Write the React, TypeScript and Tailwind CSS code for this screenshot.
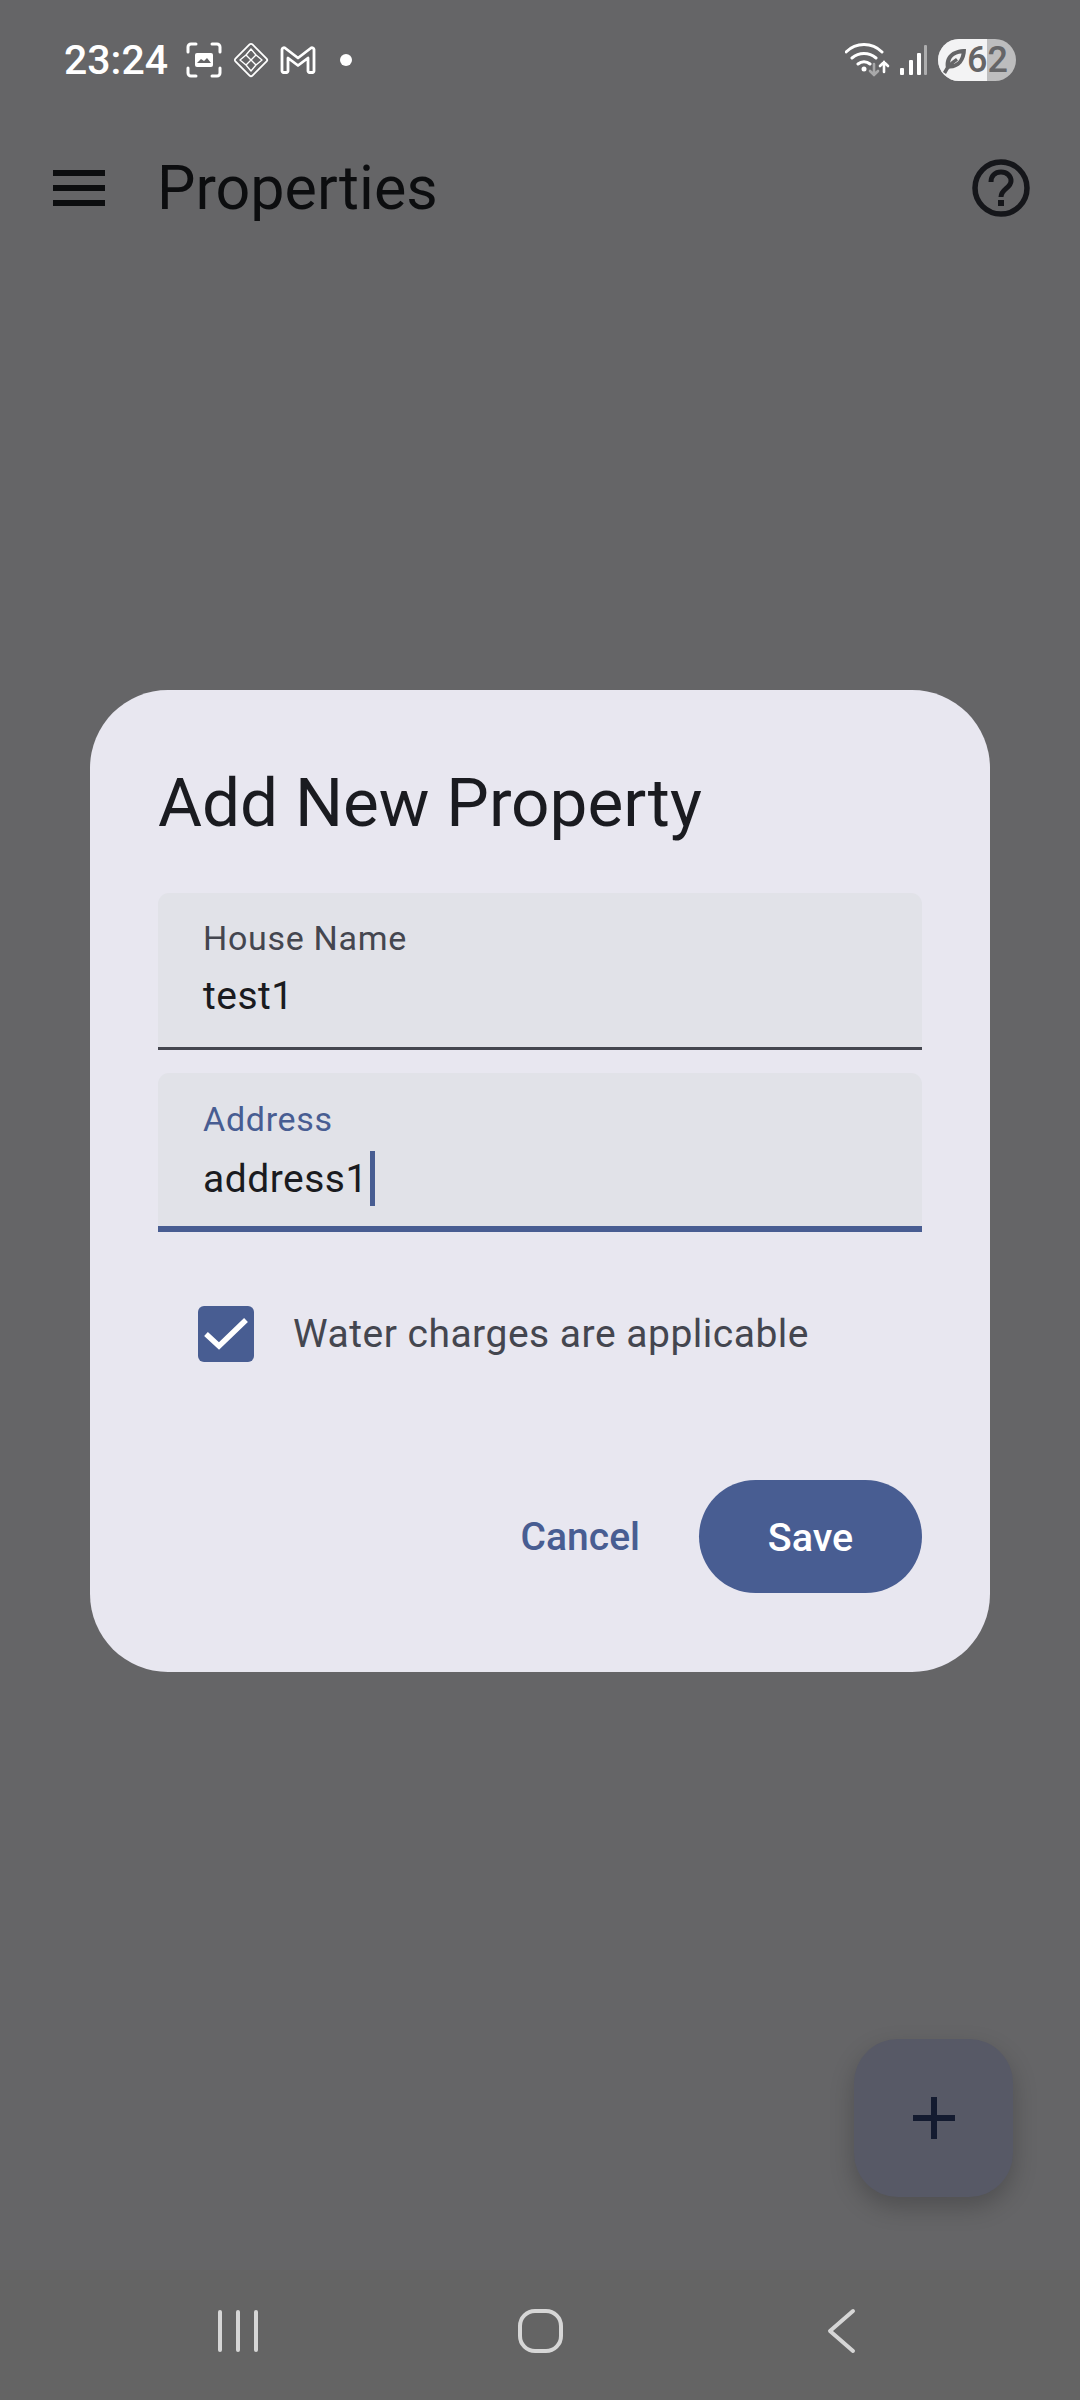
export default function App() {
  return (
    <div className="relative w-[1080px] h-[2400px] bg-[#656567] overflow-hidden flex flex-col font-['Roboto',sans-serif]">
      {/* status bar */}
      <div className="h-[120px] pl-[64px] pr-[64px] flex items-center justify-between">
        <div className="flex items-center">
          <span className="text-[41px] leading-none font-medium text-white w-[122px]">23:24</span>
          <svg width="36" height="36" viewBox="0 0 36 36" fill="none" stroke="white" strokeWidth="3" strokeLinecap="round">
            <path d="M2 10V5a3 3 0 0 1 3-3h5M26 2h5a3 3 0 0 1 3 3v5M34 26v5a3 3 0 0 1-3 3h-5M10 34H5a3 3 0 0 1-3-3v-5" />
            <rect x="9" y="11" width="18" height="14" rx="2" fill="white" stroke="none" />
            <path d="M11 21l4-4 3 2 3-3 4 5z" fill="#656567" stroke="none" />
          </svg>
          <svg className="ml-[10px]" width="38" height="38" viewBox="0 0 38 38" fill="none" stroke="white" strokeWidth="1.8" strokeLinejoin="round">
            <rect x="7" y="7" width="24" height="24" rx="2" transform="rotate(45 19 19)" />
            <path d="M19 8l5 6-5 5-5-5zM19 19l5-5 6 5-6 5zM19 19l5 5-5 6-5-6zM19 19l-5 5-6-5 6-5z" strokeWidth="1.4" />
          </svg>
          <svg className="ml-[10px]" width="36" height="28" viewBox="0 0 36 28" fill="none" stroke="white" strokeWidth="2.8" strokeLinejoin="round">
            <path d="M2 3.500a2 2 0 0 1 3-1.500L18 12 31 2a2 2 0 0 1 3 1.500V25a1.500 1.500 0 0 1-1.500 1.500h-3A1.500 1.500 0 0 1 28 25V12l-10 7.500L8 12v13a1.500 1.500 0 0 1-1.500 1.500h-3A1.500 1.500 0 0 1 2 25z" />
          </svg>
          <span className="ml-[24px] w-[12px] h-[12px] rounded-full bg-white" />
        </div>
        <div className="flex items-center">
          <svg width="46" height="34" viewBox="0 0 46 34" fill="none" strokeLinecap="round">
            <path d="M1 9C11-1 27-1 37 9M7 15c7-6 17-6 24 0M13 21c3.500-3 8.500-3 12 0" stroke="white" strokeWidth="3" />
            <circle cx="19" cy="26" r="2.500" fill="white" />
            <path d="M29 21v11M25 28l4 4 4-4" stroke="#a8a8a9" strokeWidth="2.600" />
            <path d="M39 29V19M35 23l4-4 4 4" stroke="white" strokeWidth="2.600" />
          </svg>
          <svg className="ml-[8px]" width="28" height="30" viewBox="0 0 28 30">
            <rect x="1" y="23" width="4" height="7" rx="1" fill="white" />
            <rect x="10" y="15" width="4" height="15" rx="1" fill="white" />
            <rect x="18" y="8" width="4" height="22" rx="1" fill="white" />
            <rect x="25" y="0" width="3" height="30" rx="1" fill="#adadae" />
          </svg>
          <div className="ml-[11px] relative w-[78px] h-[42px] rounded-full overflow-hidden bg-[#bdbdbe] flex items-center">
            <div className="absolute left-0 top-0 bottom-0 w-[49px] bg-[#f3f3f4]" />
            <svg className="relative ml-[4px]" width="24" height="28" viewBox="0 0 24 28" fill="#656567">
              <path d="M4 22C2 11 9 3 24 3c0 12-7 20-17 19.500-1 0-2.500-.5-3-.5zm4.500-4c5 .5 10-3 11-10.500-7 .5-12 4.500-11 10.500z" />
              <path d="M1 26c3-6 7-10 13-14l2 2.500C11 18 7 22 4 28z" />
            </svg>
            <span className="relative ml-[1px] text-[36px] leading-none font-medium text-[#656567]">62</span>
          </div>
        </div>
      </div>

      {/* app bar */}
      <div className="h-[136px] pl-[53px] pr-[50px] flex items-center justify-between">
        <div className="flex items-center">
          <div className="w-[52px] h-[36px] flex flex-col justify-between">
            <div className="h-[6px] bg-[#0c0d0f]" />
            <div className="h-[6px] bg-[#0c0d0f]" />
            <div className="h-[6px] bg-[#0c0d0f]" />
          </div>
          <span className="ml-[52px] text-[61px] leading-none text-[#0c0d0f]">Properties</span>
        </div>
        <svg width="58" height="58" viewBox="0 0 58 58" fill="none">
          <circle cx="29" cy="29" r="26" stroke="#15161a" strokeWidth="5.500" />
          <path d="M19 23c0-6 4-10 10-10s10 4 10 9c0 7-10 8-10 16" stroke="#15161a" strokeWidth="5" />
          <rect x="26" y="41" width="6" height="6" fill="#15161a" />
        </svg>
      </div>

      <div className="flex-1" />

      {/* nav bar */}
      <div className="h-[130px] bg-[#646464] pb-[8px] flex items-center">
        <div className="pl-[218px] flex gap-[14px]">
          <div className="w-[4px] h-[42px] rounded-full bg-[#d6d6d6]" />
          <div className="w-[4px] h-[42px] rounded-full bg-[#d6d6d6]" />
          <div className="w-[4px] h-[42px] rounded-full bg-[#d6d6d6]" />
        </div>
        <div className="ml-[260px] w-[45px] h-[44px] rounded-[17px] border-[4px] border-[#d6d6d6]" />
        <svg className="ml-[263px]" width="30" height="46" viewBox="0 0 30 46" fill="none" stroke="#d6d6d6" strokeWidth="4" strokeLinecap="round" strokeLinejoin="round">
          <path d="M27 3L4 23l23 20" />
        </svg>
      </div>

      {/* fab */}
      <div className="absolute left-[854px] top-[2039px] w-[159px] h-[158px] rounded-[44px] bg-[#575966] shadow-[0_10px_24px_rgba(0,0,0,0.22)] flex items-center justify-center">
        <svg width="42" height="42" viewBox="0 0 42 42" fill="#141b30">
          <rect x="18" y="0" width="6" height="42" />
          <rect x="0" y="18" width="42" height="6" />
        </svg>
      </div>

      {/* dialog */}
      <div className="absolute inset-0 pl-[90px] pt-[690px]">
        <div className="w-[900px] h-[982px] rounded-[78px] bg-[#e8e7f0] px-[68px] pt-[68px]">
          <h1 className="text-[67.500px] leading-[90px] text-[#1a1b20]">Add New Property</h1>
          <div className="mt-[45px] h-[157px] rounded-t-[11px] bg-[#e1e2e8] border-b-[3px] border-[#44464f] pl-[45px] pt-[25px]">
            <div className="text-[34px] leading-[40px] tracking-[0.7px] text-[#44464f]">House Name</div>
            <div className="mt-[13px] text-[39px] leading-[50px] tracking-[0.5px] text-[#1a1b20]">test1</div>
          </div>
          <div className="mt-[23px] h-[159px] rounded-t-[11px] bg-[#e1e2e8] border-b-[6px] border-[#485d92] pl-[45px] pt-[26px]">
            <div className="text-[34px] leading-[40px] tracking-[0.7px] text-[#485d92]">Address</div>
            <div className="mt-[12px] text-[39px] leading-[50px] tracking-[0.5px] text-[#1a1b20] flex items-center">
              address1
              <span className="ml-[2px] w-[5px] h-[55px] bg-[#485d92]" />
            </div>
          </div>
          <div className="mt-[74px] pl-[40px] flex items-center">
            <div className="w-[56px] h-[56px] rounded-[6px] bg-[#485d92] flex items-center justify-center">
              <svg width="44" height="34" viewBox="0 0 44 34" fill="none" stroke="white" strokeWidth="5.500">
                <path d="M2 17l13 12L42 3" />
              </svg>
            </div>
            <span className="ml-[39px] text-[39px] leading-none tracking-[0.5px] text-[#44464f]">Water charges are applicable</span>
          </div>
          <div className="mt-[118px] flex items-center justify-end">
            <span className="pt-[2px] text-[39px] leading-none font-medium text-[#485d92]">Cancel</span>
            <div className="ml-[59px] w-[223px] h-[113px] pt-[2px] rounded-full bg-[#485d92] flex items-center justify-center text-[39.500px] font-medium text-white">Save</div>
          </div>
        </div>
      </div>
    </div>
  );
}
